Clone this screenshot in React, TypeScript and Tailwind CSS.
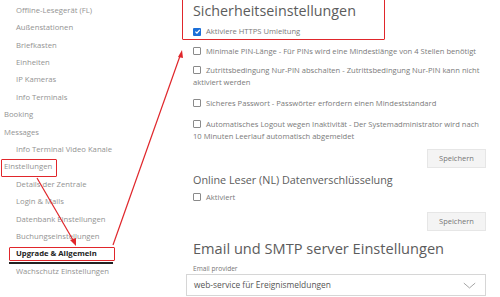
import React from "react";

const NAV: { label: string; level: 0 | 1; active?: boolean }[] = [
  { label: "Offline-Lesegerät (FL)", level: 1 },
  { label: "Außenstationen", level: 1 },
  { label: "Briefkasten", level: 1 },
  { label: "Einheiten", level: 1 },
  { label: "IP Kameras", level: 1 },
  { label: "Info Terminals", level: 1 },
  { label: "Booking", level: 0 },
  { label: "Messages", level: 0 },
  { label: "Info Terminal Video Kanale", level: 1 },
  { label: "Einstellungen", level: 0 },
  { label: "Details der Zentrale", level: 1 },
  { label: "Login & Mails", level: 1 },
  { label: "Datenbank Einstellungen", level: 1 },
  { label: "Buchungseinstellungen", level: 1 },
  { label: "Upgrade & Allgemein", level: 1, active: true },
  { label: "Wachschutz Einstellungen", level: 1 },
];

function Box({ checked }: { checked?: boolean }) {
  if (checked) {
    return (
      <span className="inline-flex w-[8px] h-[8px] rounded-[1px] bg-[#1b6fd8] items-center justify-center align-[-1px]">
        <svg viewBox="0 0 10 10" className="w-[7px] h-[7px]">
          <path d="M2 5.2 L4.2 7.3 L8.2 2.6" fill="none" stroke="white" strokeWidth="1.8" />
        </svg>
      </span>
    );
  }
  return (
    <span className="inline-block w-[8px] h-[8px] border border-[#8a8a8a] rounded-[1px] bg-white align-[-1px]" />
  );
}

// h is the fixed block height of the row (12px per line)
function Check({ label, checked, h = "h-[12px]" }: { label: string; checked?: boolean; h?: string }) {
  return (
    <div className={`${h} text-[7.6px] leading-[12px] text-[#7a7a7a]`}>
      <Box checked={checked} />
      <span className="ml-[5px]">{label}</span>
    </div>
  );
}

function SaveButton() {
  return (
    <div className="flex justify-end">
      <button className="w-[59px] h-[19px] bg-[#f4f4f4] border border-[#e6e6e6] text-[7.5px] text-[#777]">
        Speichern
      </button>
    </div>
  );
}

export default function App() {
  return (
    <div
      className="relative w-[500px] h-[297px] overflow-hidden bg-white flex"
      style={{ fontFamily: "'Open Sans', 'Noto Sans', sans-serif" }}
    >
      {/* Sidebar */}
      <nav className="w-[186px] shrink-0 pt-[2px]">
        {NAV.map((item) => (
          <div
            key={item.label}
            className={`h-[17.4px] flex items-center text-[7.7px] ${
              item.level === 1 ? "pl-[16px]" : "pl-[4px]"
            } ${item.active ? "font-bold text-[#222]" : "text-[#939393]"}`}
          >
            {item.label}
          </div>
        ))}
      </nav>

      {/* Main */}
      <main className="w-[300px] shrink-0">
        <div className="pl-[7px] pr-[2px]">
          <h1 className="h-[18px] text-[14.3px] leading-[18px] text-[#5c5c5c] mt-[2px]">Sicherheitseinstellungen</h1>
          <div className="mt-[5px] flex flex-col">
            <Check label="Aktiviere HTTPS Umleitung" checked />
            <div className="mt-[8px]">
              <Check label="Minimale PIN-Länge - Für PINs wird eine Mindestlänge von 4 Stellen benötigt" />
            </div>
            <div className="mt-[7px]">
              <Check h="h-[24px]" label="Zutrittsbedingung Nur-PIN abschalten - Zutrittsbedingung Nur-PIN kann nicht aktiviert werden" />
            </div>
            <div className="mt-[9px]">
              <Check label="Sicheres Passwort - Passwörter erfordern einen Mindeststandard" />
            </div>
            <div className="mt-[9px] pr-[3px]">
              <Check h="h-[24px]" label="Automatisches Logout wegen Inaktivität - Der Systemadministrator wird nach 10 Minuten Leerlauf automatisch abgemeldet" />
            </div>
          </div>
        </div>

        <div className="mt-[7px]">
          <SaveButton />
        </div>

        <div className="px-[7px]">
          <h2 className="h-[14px] text-[10.8px] leading-[14px] text-[#5c5c5c] mt-[5px]">Online Leser (NL) Datenverschlüsselung</h2>
          <div className="mt-[4px]">
            <Check label="Aktiviert" />
          </div>
        </div>

        <div className="mt-[9px]">
          <SaveButton />
        </div>

        <div className="px-[7px]">
          <h2 className="h-[18px] text-[14.6px] leading-[18px] text-[#5c5c5c] mt-[8px]">Email und SMTP server Einstellungen</h2>
          <div className="h-[8px] text-[6.6px] leading-[8px] text-[#777] mt-[8px]">Email provider</div>
        </div>
        <div className="mt-[1px] h-[22px] border border-[#d6d6d6] flex items-center justify-between pl-[7px] pr-[9px]">
          <span className="text-[8.4px] text-[#555]">web-service für Ereignismeldungen</span>
          <svg viewBox="0 0 16 8" className="w-[13px] h-[7px]">
            <path d="M1 1 L8 7 L15 1" fill="none" stroke="#9a9a9a" strokeWidth="1.1" />
          </svg>
        </div>
      </main>

      {/* Annotation overlays */}
      <div className="absolute left-[1px] top-[159px] w-[56px] h-[18px] border-[1.5px] border-[#e0262b] rounded-[1px]" />
      <div className="absolute left-[9px] top-[262px] w-[104px] h-[1.5px] bg-[#222]" />
      <div className="absolute left-[9px] top-[247px] w-[106px] h-[14px] border-[1.5px] border-[#e0262b] rounded-[1px]" />
      <div className="absolute left-[182px] top-[-3px] w-[203px] h-[43px] border-[1.5px] border-[#e0262b] rounded-[1px]" />
      <svg className="absolute inset-0 pointer-events-none" width="500" height="297" viewBox="0 0 500 297">
        <line x1="37" y1="178" x2="73" y2="240" stroke="#e0262b" strokeWidth="1.2" />
        <polygon points="76,246 70,240 76,238" fill="#e0262b" />
        <line x1="113" y1="245" x2="180" y2="56" stroke="#e0262b" strokeWidth="1.2" />
        <polygon points="182,50 178,57 183,58" fill="#e0262b" />
      </svg>
    </div>
  );
}
